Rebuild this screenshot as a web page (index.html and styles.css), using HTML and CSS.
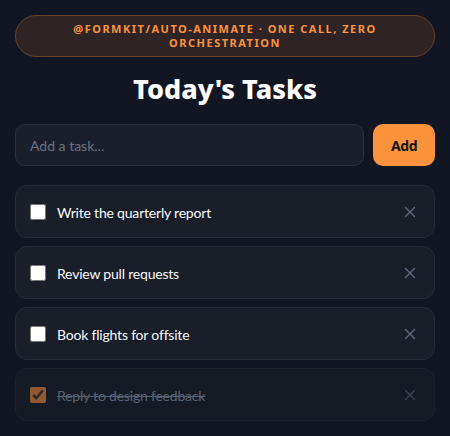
FILE: index.html
```html
<!DOCTYPE html>
<html lang="en">
<head>
<meta charset="utf-8">
<title>Today's Tasks</title>
<link rel="stylesheet" href="styles.css">
</head>
<body>
<main class="app">
  <div class="badge">@formkit/auto-animate · one call, zero orchestration</div>
  <h1 class="title">Today's Tasks</h1>
  <form class="add-row" onsubmit="return false">
    <input class="add-input" type="text" placeholder="Add a task...">
    <button class="add-btn" type="submit">Add</button>
  </form>
  <ul class="tasks">
    <li class="task">
      <input class="check" type="checkbox">
      <span class="label">Write the quarterly report</span>
      <button class="remove" type="button" aria-label="Remove"><svg viewBox="0 0 12 12" width="12" height="12"><path d="M1.5 1.5 L10.5 10.5 M10.5 1.5 L1.5 10.5"/></svg></button>
    </li>
    <li class="task">
      <input class="check" type="checkbox">
      <span class="label">Review pull requests</span>
      <button class="remove" type="button" aria-label="Remove"><svg viewBox="0 0 12 12" width="12" height="12"><path d="M1.5 1.5 L10.5 10.5 M10.5 1.5 L1.5 10.5"/></svg></button>
    </li>
    <li class="task">
      <input class="check" type="checkbox">
      <span class="label">Book flights for offsite</span>
      <button class="remove" type="button" aria-label="Remove"><svg viewBox="0 0 12 12" width="12" height="12"><path d="M1.5 1.5 L10.5 10.5 M10.5 1.5 L1.5 10.5"/></svg></button>
    </li>
    <li class="task done">
      <input class="check" type="checkbox" checked>
      <span class="label">Reply to design feedback</span>
      <button class="remove" type="button" aria-label="Remove"><svg viewBox="0 0 12 12" width="12" height="12"><path d="M1.5 1.5 L10.5 10.5 M10.5 1.5 L1.5 10.5"/></svg></button>
    </li>
  </ul>
</main>
</body>
</html>
```
FILE: styles.css
```css
* { box-sizing: border-box; }
html, body { margin: 0; padding: 0; }
body {
  background: #111622;
  color: #f1f5f9;
  font-family: "Noto Sans", "Open Sans", "DejaVu Sans", sans-serif;
}
.app {
  padding: 15px;
  display: flex;
  flex-direction: column;
}
.badge {
  border: 1px solid #6b4328;
  background: #2e2425;
  border-radius: 999px;
  color: #fb923c;
  font-size: 11px;
  font-weight: 700;
  letter-spacing: 1.5px;
  line-height: 14px;
  text-transform: uppercase;
  text-align: center;
  padding: 6px 30px;
}
.title {
  margin: 15px 0 18px;
  text-align: center;
  font-size: 27px;
  font-weight: 800;
  line-height: 34px;
  color: #ffffff;
}
.add-row {
  display: flex;
  gap: 9px;
  margin: 0 0 19px;
}
.add-input {
  flex: 1;
  height: 42px;
  border: 1px solid #2c313e;
  background: #1b1f2b;
  border-radius: 10px;
  padding: 0 14px;
  color: #f1f5f9;
  font-family: Lato, "Noto Sans", sans-serif;
  font-size: 14px;
  outline: none;
}
.add-input::placeholder { color: #6b7180; }
.add-btn {
  width: 62px;
  height: 42px;
  border: 0;
  border-radius: 10px;
  background: #fb923c;
  color: #111111;
  font-family: "Noto Sans", sans-serif;
  font-size: 14px;
  font-weight: 700;
  letter-spacing: -0.4px;
}
.tasks {
  list-style: none;
  margin: 0;
  padding: 0;
  display: flex;
  flex-direction: column;
  gap: 8px;
}
.task {
  display: flex;
  align-items: center;
  gap: 11px;
  height: 53px;
  padding: 0 14px;
  border: 1px solid #282c38;
  background: #1a1e29;
  border-radius: 12px;
}
.check {
  width: 16px;
  height: 16px;
  margin: 0;
  accent-color: #fb923c;
  flex: none;
}
.label {
  flex: 1;
  font-family: Lato, "Noto Sans", sans-serif;
  font-size: 14px;
  letter-spacing: -0.2px;
  color: #f8fafc;
  padding-top: 1px;
}
.remove {
  width: 20px;
  height: 20px;
  padding: 0;
  border: 0;
  background: none;
  display: flex;
  align-items: center;
  justify-content: center;
}
.remove svg {
  fill: none;
  stroke: #5f6b7d;
  stroke-width: 1.4;
  stroke-linecap: round;
}
.task.done { opacity: 0.55; }
.task.done .label {
  text-decoration: line-through;
  color: #94a3b8;
}
```
